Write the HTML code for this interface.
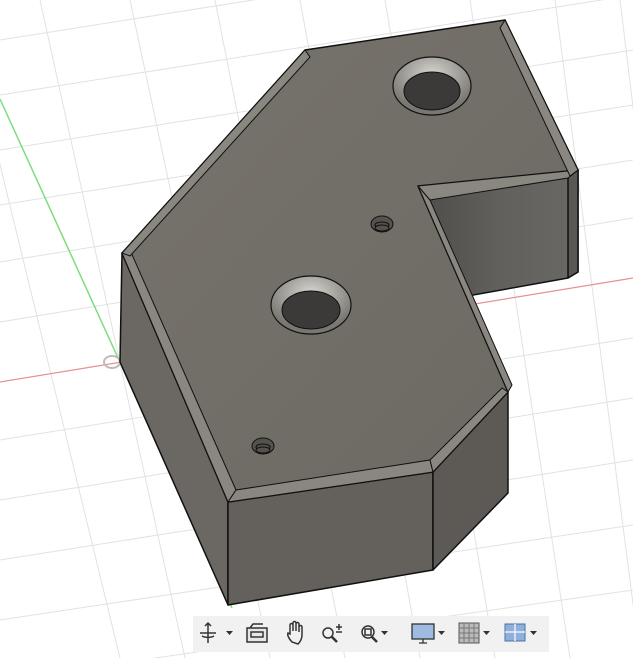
<!DOCTYPE html>
<html><head><meta charset="utf-8"><style>
html,body{margin:0;padding:0;width:633px;height:658px;overflow:hidden;background:#fff;font-family:"Liberation Sans",sans-serif}
svg{position:absolute;left:0;top:0}
</style></head><body>
<svg width="633" height="658" viewBox="0 0 633 658">
<defs>
<linearGradient id="top" x1="0" y1="0" x2="1" y2="1"><stop offset="0" stop-color="#77736c"/><stop offset="1" stop-color="#6c6963"/></linearGradient>
<linearGradient id="notch" x1="0" y1="0" x2="1" y2="0"><stop offset="0" stop-color="#4e4c49"/><stop offset="0.5" stop-color="#62605c"/><stop offset="1" stop-color="#6a6864"/></linearGradient>
<radialGradient id="cs" cx="0.5" cy="0.3" r="0.6"><stop offset="0" stop-color="#d8d6d2"/><stop offset="1" stop-color="#7a7772"/></radialGradient>
</defs>
<g stroke="#e2e2e2" stroke-width="1" fill="none">
<line x1="0" y1="40" x2="633" y2="-60"/><line x1="0" y1="95" x2="633" y2="-5"/>
<line x1="0" y1="150" x2="633" y2="50"/><line x1="0" y1="205" x2="633" y2="105"/>
<line x1="0" y1="262" x2="633" y2="160"/><line x1="0" y1="322" x2="633" y2="218"/>
<line x1="0" y1="440" x2="633" y2="338"/><line x1="0" y1="500" x2="633" y2="398"/>
<line x1="0" y1="560" x2="633" y2="460"/><line x1="0" y1="620" x2="633" y2="525"/>
<line x1="0" y1="680" x2="633" y2="590"/>
<line x1="-40" y1="0" x2="120" y2="658"/><line x1="40" y1="0" x2="185" y2="658"/>
<line x1="130" y1="0" x2="270" y2="658"/><line x1="215" y1="0" x2="345" y2="658"/>
<line x1="300" y1="0" x2="420" y2="658"/><line x1="385" y1="0" x2="495" y2="658"/>
<line x1="470" y1="0" x2="570" y2="658"/><line x1="555" y1="0" x2="640" y2="658"/>
<line x1="620" y1="0" x2="700" y2="658"/>
</g>
<line x1="0" y1="382" x2="633" y2="278" stroke="#e89090" stroke-width="1.2"/>
<line x1="0" y1="99" x2="232" y2="608" stroke="#7fdc7f" stroke-width="1.5"/>
<ellipse cx="112" cy="362" rx="8" ry="6" fill="none" stroke="#bbb" stroke-width="2"/>
<g stroke="#111" stroke-width="1.5" stroke-linejoin="round">
<polygon points="122,253 228,502 228,605 120,362" fill="#6b6762"/>
<polygon points="228,502 433,472 433,570 228,605" fill="#64615c"/>
<polygon points="433,472 508,392 508,493 433,570" fill="#5d5a56"/>
<!-- notch wall -->
<polygon points="418,186 578,170 578,272 568,278 462,297" fill="url(#notch)"/>
<polygon points="568,177 578,170 578,272 568,278" fill="#5a5853"/>
<polygon points="122,253 305,50 505,20 578,170 418,186 508,392 433,472 228,502" fill="url(#top)"/>
</g>
<g fill="#8a8780" stroke="#111" stroke-width="1">
<polygon points="122,253 130,250 236,490 228,502"/>
<polygon points="228,502 236,490 430,460 433,472"/>
<polygon points="433,472 430,460 502,388 508,392"/>
<polygon points="418,186 430,200 512,385 508,392"/>
<polygon points="418,186 578,170 568,178 430,200"/>
<polygon points="505,20 578,170 570,176 500,28"/>
<polygon points="122,253 305,50 310,57 130,256"/>
</g>
<ellipse cx="432" cy="86" rx="39" ry="29" fill="url(#cs)" stroke="#111" stroke-width="1.2"/>
<ellipse cx="432" cy="91" rx="28" ry="19" fill="#3b3a39" stroke="#111"/>
<ellipse cx="311" cy="305" rx="40" ry="29" fill="url(#cs)" stroke="#111" stroke-width="1.2"/>
<ellipse cx="311" cy="310" rx="29" ry="19" fill="#3b3a39" stroke="#111"/>
<g fill="#55524d" stroke="#111" stroke-width="1">
<ellipse cx="382" cy="224" rx="11" ry="8"/><ellipse cx="382" cy="225" rx="7" ry="3"/><ellipse cx="382" cy="228" rx="7" ry="3"/>
<ellipse cx="263" cy="446" rx="11" ry="8"/><ellipse cx="263" cy="447" rx="7" ry="3"/><ellipse cx="263" cy="450" rx="7" ry="3"/>
</g>
<rect x="193" y="616" width="356" height="36" fill="#f1f1f1"/>
<g stroke="#333" stroke-width="1.5" fill="none">
<path d="M208 623v20M200 633h16M205 626l3-3 3 3M202 636a8 4 0 0 0 12 0"/>
<rect x="247" y="628" width="20" height="14" fill="#e6e6e6"/><rect x="251" y="632" width="12" height="5"/>
<path d="M250 628l3-4h10"/>
<path d="M292 642c-3-3-5-7-4-9l2 1v-9a1.5 1.5 0 0 1 3 0v6-8a1.5 1.5 0 0 1 3 0v8-7a1.5 1.5 0 0 1 3 0v8-5a1.5 1.5 0 0 1 3 0v8c0 4-2 7-4 9z"/>
<circle cx="328" cy="633" r="5"/><path d="M332 637l5 5" stroke-width="2.5"/><path d="M339 624v6M336 627h6M336 632h6"/>
<circle cx="368" cy="632" r="6"/><rect x="365" y="629" width="6" height="6"/><path d="M372 637l5 5" stroke-width="2.5"/>
</g>
<rect x="412" y="624" width="22" height="15" fill="#9fbce0" stroke="#333" stroke-width="1.3"/>
<path d="M419 643h8M423 639v4" stroke="#333" stroke-width="1.3"/>
<rect x="459" y="623" width="20" height="20" fill="#bbb" stroke="#555"/>
<path d="M464 623v20M469 623v20M474 623v20M459 628h20M459 633h20M459 638h20" stroke="#777" stroke-width="1"/>
<rect x="505" y="624" width="20" height="17" fill="#8fb0dc" stroke="#4a6fa5"/>
<path d="M515 624v17M505 632h20" stroke="#eef" stroke-width="1.5"/>
<g fill="#333">
<path d="M226 631h7l-3.5 4z"/><path d="M381 631h7l-3.5 4z"/><path d="M438 631h7l-3.5 4z"/><path d="M483 631h7l-3.5 4z"/><path d="M530 631h7l-3.5 4z"/>
</g>
</svg>
</body></html>
